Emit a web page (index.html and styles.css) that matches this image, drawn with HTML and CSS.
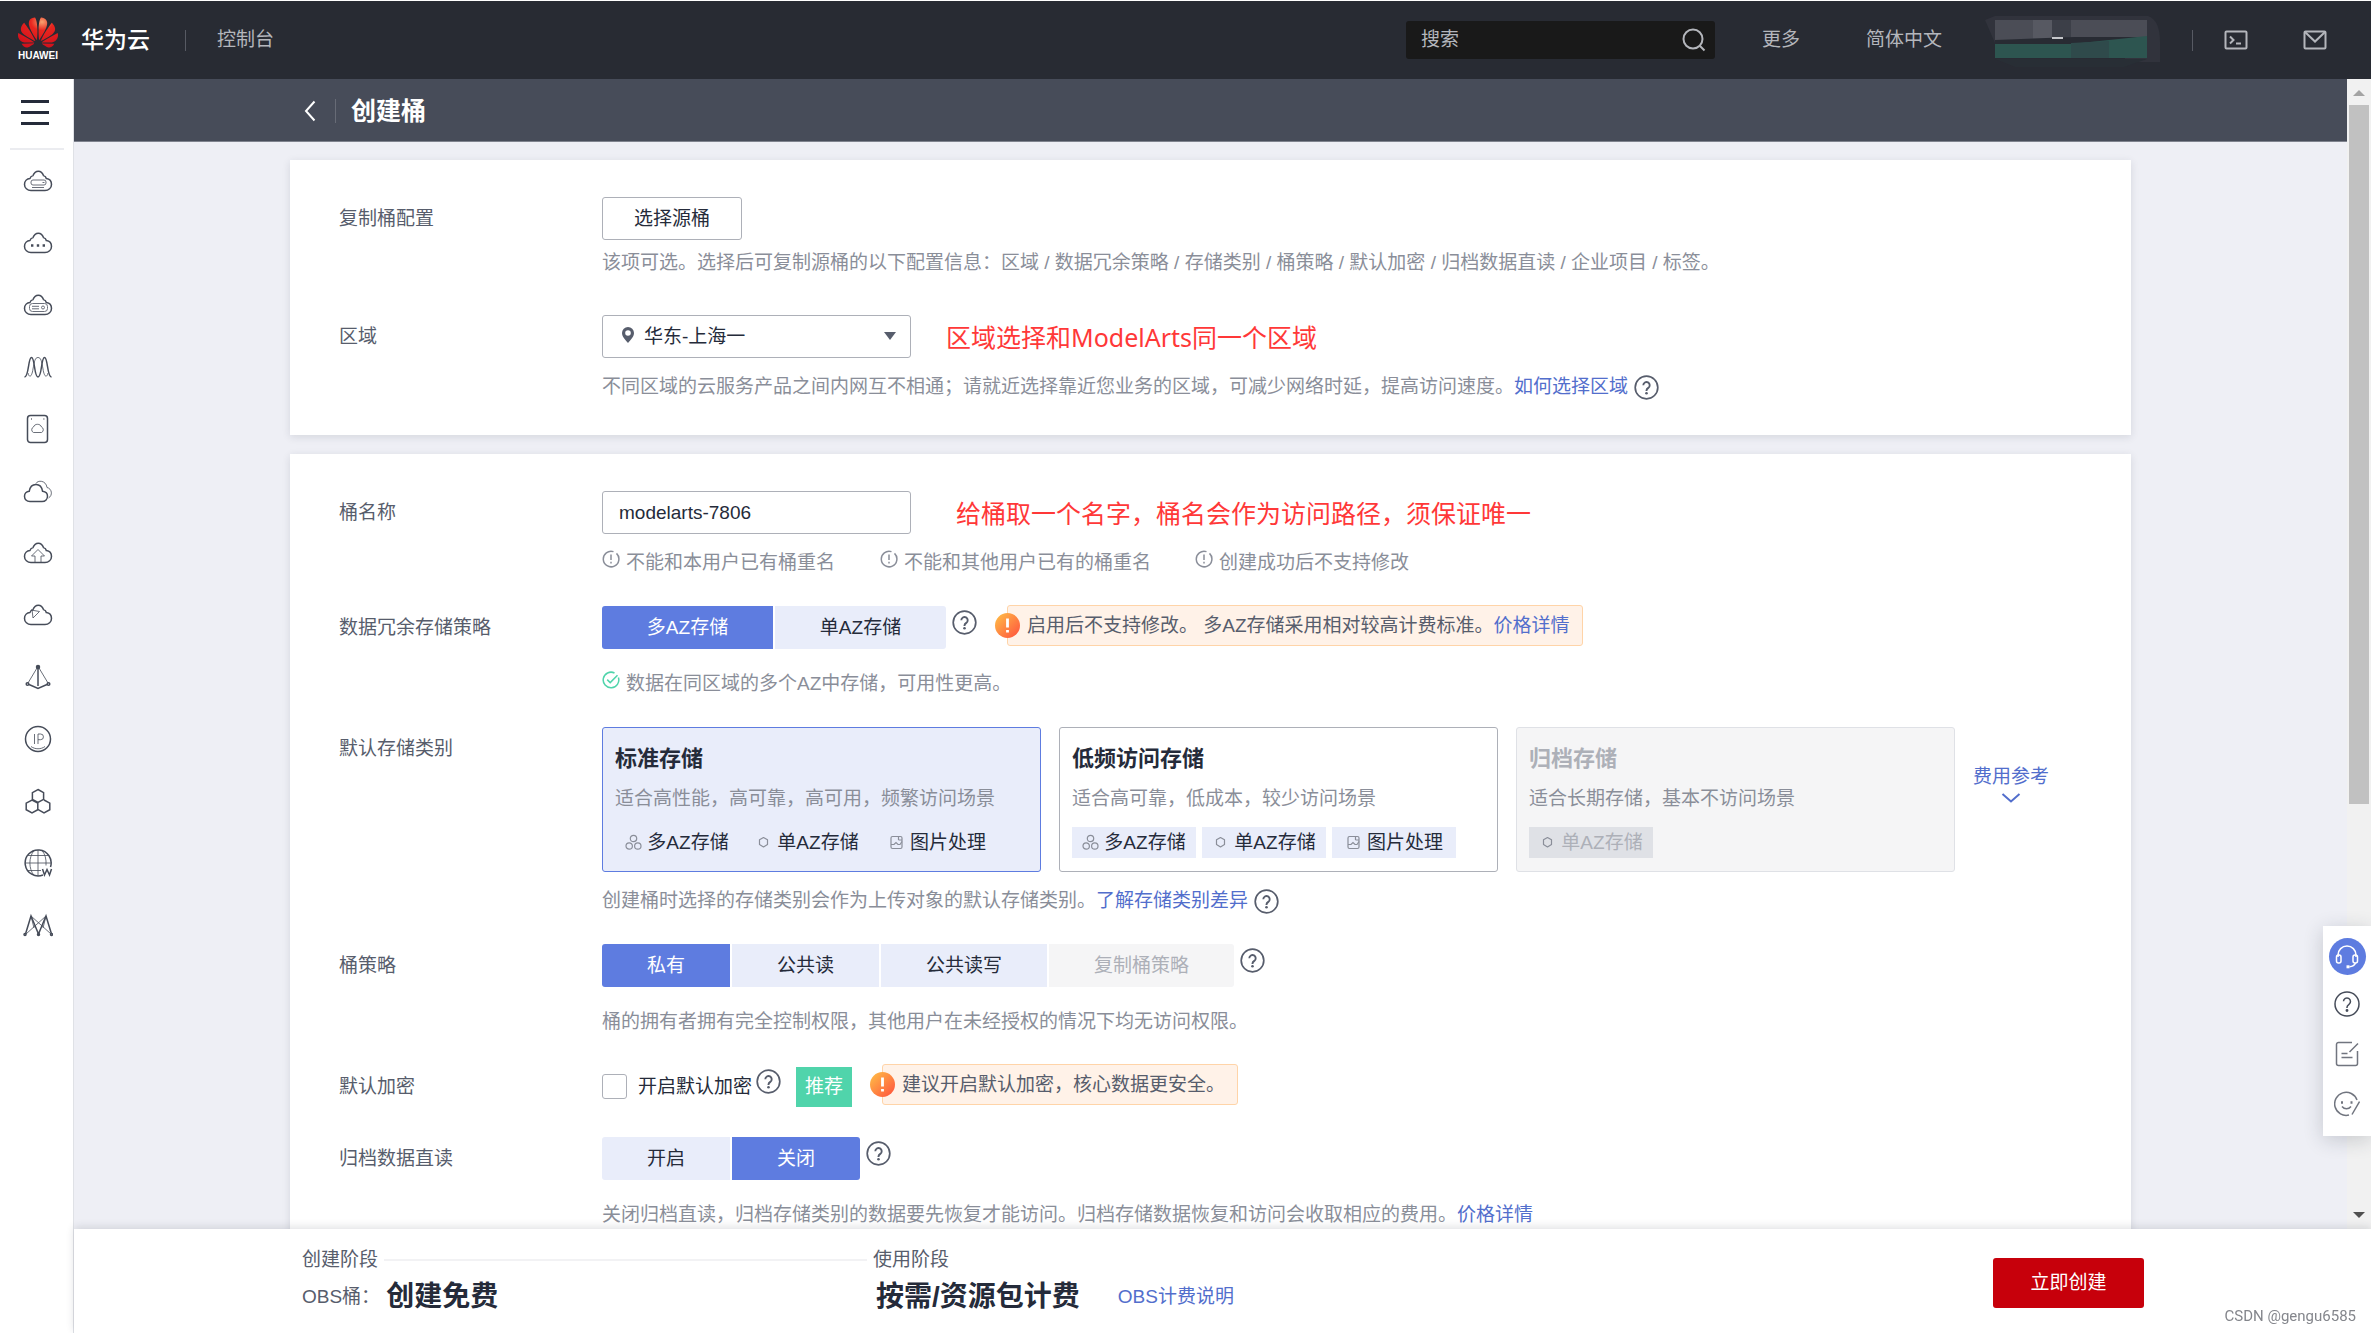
FILE: index.html
```html
<!DOCTYPE html>
<html lang="zh-CN">
<head>
<meta charset="utf-8">
<meta name="viewport" content="width=device-width, initial-scale=1">
<title>创建桶 - 华为云</title>
<link rel="stylesheet" href="styles.css">
</head>
<body>
<svg class="sprite" aria-hidden="true">
  <symbol id="cloud" viewBox="0 0 30 24"><path d="M8 21.5C4.4 21.5 1.5 19 1.5 15.4 1.5 12 4 9.6 7 9.4 7.5 7.6 8.6 7 10 6.6 11 4 12.8 2.2 15.3 2.2S19.600 4 20.500 6.600C22 7 23 7.800 23.300 9.500 26.200 9.900 28.500 12.200 28.500 15.400 28.500 19 25.600 21.500 22 21.500Z"/></symbol>
  <symbol id="help" viewBox="0 0 25 25"><circle cx="12.500" cy="12.500" r="11.300" stroke-width="1.700"/><path stroke-width="1.900" d="M9.300 10.200a3.200 3.200 0 1 1 5 2.700c-1.200.8-1.800 1.300-1.800 2.600v.4"/><circle cx="12.500" cy="18.300" r="1.300" fill="currentColor" stroke="none"/></symbol>
  <symbol id="note" viewBox="0 0 18 18"><path d="M11.500 1.600A7.800 7.800 0 1 0 14.500 3.400M9 4.500v5.500M9 11.800v1.700"/></symbol>
  <symbol id="done" viewBox="0 0 18 18"><path d="M12.500 2A7.800 7.800 0 1 0 16.400 6.500M5.200 8.600l3 3 7.300-7.300"/></symbol>
  <symbol id="warn" viewBox="0 0 25 25"><defs><linearGradient id="warn-fill" x1="0" y1="0" x2="1" y2="1"><stop offset="0" stop-color="#ffc247"/><stop offset="1" stop-color="#ff4f3d"/></linearGradient></defs><circle cx="12.500" cy="12.500" r="12.500" fill="url(#warn-fill)" stroke="none"/><path d="M12.500 5.500v9M12.500 17v2.500" stroke="#fff" stroke-width="2.800"/></symbol>
  <symbol id="multi" viewBox="0 0 17 17"><circle cx="8.500" cy="4.500" r="3.200"/><circle cx="4.200" cy="12" r="3.200"/><circle cx="12.800" cy="12" r="3.200"/></symbol>
  <symbol id="single" viewBox="0 0 17 17"><path d="M8.500 3.500l4 2.300v4.800l-4 2.300-4-2.300V5.800z" stroke-linejoin="round"/></symbol>
  <symbol id="image" viewBox="0 0 17 17"><rect x="3" y="2.500" width="11" height="12" rx="1.500"/><path d="M3 10.500h3l2-2 2 2h2l2-3M10.500 3v3M10.500 6h3.500"/></symbol>
</svg>

<header class="topbar">
  <a class="brand" href="#">
    <span class="brand-mark">
      <svg class="brand-flower" viewBox="0 2.900 24 18.200" aria-hidden="true"><defs><radialGradient id="petal" cx=".6" cy=".15" r=".8"><stop offset="0" stop-color="#f7a36f"/><stop offset=".35" stop-color="#e8261f"/><stop offset="1" stop-color="#d3121c"/></radialGradient></defs><path fill="url(#petal)" d="M3.670 6.140S1.820 7.910 1.720 9.780v.35c.08 1.510 1.220 2.400 1.220 2.400 1.830 1.790 6.260 4.040 7.300 4.550 0 0 .06.03.1-.01l.02-.04v-.04C7.520 10.800 3.670 6.140 3.670 6.140zM9.650 18.600c-.02-.08-.1-.08-.1-.08l-7.380.26c.8 1.430 2.150 2.530 3.560 2.200.96-.25 3.160-1.780 3.880-2.300.06-.05.04-.09.04-.09zm.08-.78C6.490 15.630.21 12.280.21 12.280c-.15.46-.2.9-.21 1.300v.07c0 1.070.4 1.820.4 1.820.8 1.690 2.340 2.200 2.340 2.200.7.3 1.400.31 1.400.31.12.02 4.400 0 5.540 0 .05 0 .08-.05.08-.05v-.06c0-.03-.03-.05-.03-.05zM9.060 3.190a3.420 3.420 0 00-2.570 3.150v.41c.03.6.16 1.050.16 1.050.66 2.900 3.860 7.650 4.550 8.650.05.05.1.03.1.03a.1.1 0 00.06-.1c1.060-10.600-1.110-13.420-1.110-13.420-.32.02-1.190.23-1.190.23zm8.299 2.270s-.49-1.800-2.440-2.280c0 0-.57-.14-1.170-.22 0 0-2.180 2.810-1.120 13.430.01.07.06.08.06.08.07.03.1-.03.1-.03.72-1.030 3.900-5.760 4.550-8.640 0 0 .36-1.400.02-2.340zm-2.920 13.070s-.07 0-.09.05c0 0-.01.07.03.1.7.51 2.850 2 3.880 2.300 0 0 .16.05.43.06h.14c.69-.02 1.900-.37 3-2.260l-7.400-.25zm7.830-8.410c.14-2.060-1.940-3.970-1.940-3.980 0 0-3.850 4.660-6.670 10.800 0 0-.03.08.02.13l.04.01h.06c1.060-.53 5.460-2.770 7.280-4.540 0 0 1.150-.93 1.210-2.420zm1.520 2.140s-6.280 3.370-9.520 5.550c0 0-.05.04-.03.11 0 0 .03.06.07.06 1.160 0 5.560 0 5.670-.02 0 0 .57-.02 1.270-.29 0 0 1.560-.5 2.370-2.270 0 0 .73-1.450.17-3.140z"/></svg>
      <span class="brand-word">HUAWEI</span>
    </span>
    <span class="brand-name">华为云</span>
  </a>
  <span class="bar-divider"></span>
  <a class="top-link console" href="#">控制台</a>
  <label class="search">
    <input type="search" placeholder="搜索" aria-label="搜索">
    <svg viewBox="0 0 24 24" aria-hidden="true"><circle cx="11" cy="11" r="9.500"/><path d="M18 18l4.500 4.500"/></svg>
  </label>
  <a class="top-link more" href="#">更多</a>
  <a class="top-link lang" href="#">简体中文</a>
  <svg class="account" viewBox="0 0 184 54" role="img" aria-label="账号">
    <path fill="#31333c" d="M0 7L10 3h145l8 0q12 4 12 26v20H140V30H10z"/>
    <path fill="#4b4d56" d="M10 7h152v18l-152 6z"/><path fill="#575962" d="M48 7h19v20H48z"/><path fill="#3c3f48" d="M67 7h19v20H67z"/>
    <path fill="#282e35" d="M10 46h152l-34 12H40z"/>
    <path fill="#282b33" d="M10 27l80-3h72v18H10z"/>
    <path fill="#2d5550" d="M10 31h76l76-8v22H10z"/><path fill="#2f4a4b" d="M86 30l38-2v17H86z"/>
    <path fill="#c5c6ca" d="M67 24h11v2H67z"/>
  </svg>
  <span class="bar-divider"></span>
  <button class="icon-btn" type="button" aria-label="命令行"><svg viewBox="0 0 24 20"><rect x="1.500" y="1.500" width="21" height="17" rx="1"/><path d="M6 6.500L9.500 10 6 13.500M12 13.500h5"/></svg></button>
  <button class="icon-btn" type="button" aria-label="消息"><svg viewBox="0 0 24 20"><rect x="1.500" y="1.500" width="21" height="17" rx="1"/><path d="M2 2l10 9.500L22 2"/></svg></button>
</header>

<div class="shell">
  <nav class="rail" aria-label="服务列表">
    <button class="menu-btn" type="button" aria-label="菜单"><span></span><span></span><span></span></button>
    <a href="#" aria-label="弹性云服务器"><svg viewBox="0 0 30 24"><use href="#cloud"/><g class="thin"><rect x="8" y="11" width="15" height="5" rx="2"/><path d="M9 18.500h12M19.500 13.500h2"/></g></svg></a>
    <a href="#" aria-label="云耀云服务器"><svg viewBox="0 0 30 24"><use href="#cloud"/><path stroke-width="2.400" d="M8 14.500h2.400M13.800 14.500h2.400M19.600 14.500H22"/></svg></a>
    <a href="#" aria-label="裸金属服务器"><svg viewBox="0 0 30 24"><use href="#cloud"/><g class="thin"><rect x="6.500" y="10.500" width="18" height="8" rx="3"/><path d="M9 13.300h7M9 15.800h7"/><circle cx="20" cy="14.500" r="1.500"/></g></svg></a>
    <a href="#" aria-label="弹性伸缩"><svg viewBox="0 0 30 24"><path d="M1.500 22C6 22 5 2.500 8.500 2.500S11 22 15 22 18 2.500 21.500 2.500 24 22 28.500 22"/><path class="thin" d="M5 18c1.500 6 4 3 5-4C11.500 6 12 2.500 15 2.500S18.500 6 20 14c1 7 3.500 10 5 4"/></svg></a>
    <a href="#" aria-label="云硬盘"><svg viewBox="0 0 30 30"><rect x="4.500" y="1.500" width="20" height="27" rx="3"/><path class="thin" d="M10.500 18.500a3 3 0 0 1 0-5.500c1-3.600 7-3.600 8 0a3 3 0 0 1 0 5.500z"/><path d="M8 5h.8M20.500 5h.8"/></svg></a>
    <a href="#" aria-label="云备份"><svg viewBox="0 0 30 24"><path d="M7 22.500C3.500 22.500 1.500 20 1.500 17.300S3.500 12.500 6.200 12.300C7 7.500 10 5.500 13 5.500s5.800 2 6.600 6.800c3 .4 4.900 2.400 4.900 5s-2 5.200-5.500 5.200z"/><path class="thin" d="M13 4.500C14.500 1 23 1 24 8.500c5 1 6 8 1.500 10.500"/></svg></a>
    <a href="#" aria-label="对象存储服务"><svg viewBox="0 0 30 24"><use href="#cloud"/><path class="thin" d="M12 21v-6H8.500L15 8.500l6.500 6.500H18v6"/></svg></a>
    <a href="#" aria-label="虚拟私有云"><svg viewBox="0 0 30 24"><use href="#cloud"/><path class="thin" d="M9 6.500l1 8.500 6.500-6.500L8 7"/></svg></a>
    <a href="#" aria-label="弹性负载均衡"><svg viewBox="0 0 30 26"><path class="thin" d="M14 4L5 19M16 4l9 15"/><path d="M15 4v18M6 20.500l9 4 9-4"/><circle cx="15" cy="3" r="1.500" fill="currentColor"/><circle cx="4.500" cy="20" r="1.300"/><circle cx="25.500" cy="20" r="1.300"/></svg></a>
    <a href="#" aria-label="弹性公网IP"><svg viewBox="0 0 30 30"><circle cx="15" cy="15" r="12.500"/><path class="thin" d="M11.500 10v10M15 20V10h2.600a2.800 2.800 0 0 1 0 5.700H15M8 22.500c4 3 10 3 14 0"/></svg></a>
    <a href="#" aria-label="区块链服务"><svg viewBox="0 0 30 28"><path d="M15 2.500l5.600 3.200v6.600L15 15.500l-5.600-3.200V5.700zM9 13l5.800 3.200v6.500L9 26l-5.800-3.300v-6.500zM21 13l5.800 3.200v6.500L21 26l-5.800-3.300"/></svg></a>
    <a href="#" aria-label="域名与网站"><svg viewBox="0 0 30 30"><path d="M20 27A13 13 0 1 1 27.500 19"/><path class="thin" d="M2 15h26M5 7.500h20M5 22.500h13M15 2v26M11 2.500c-5.500 7-5.500 18 0 25M19 2.500c3 3.500 4.500 8.500 4 15"/><path d="M19.500 21l2 6 2.500-5.500 2.500 5.500 2-6"/></svg></a>
    <a href="#" aria-label="ModelArts"><svg viewBox="0 0 30 24"><path d="M2.500 21L8 3l7.500 18L23 3l5.500 18"/><path class="thin" d="M3 21L23 3M8 3l20 18M8 3l3 12M23 3l-3 12"/><circle cx="2" cy="21.500" r="1"/><circle cx="15.500" cy="21.500" r="1"/><circle cx="28.500" cy="21.500" r="1"/></svg></a>
  </nav>

  <div class="workspace">
    <div class="viewport">
      <main class="content">
        <div class="page-head">
          <div class="wrap page-head-in">
            <a class="back" href="#" aria-label="返回"><svg viewBox="0 0 12 22"><path d="M10.500 1.500L2 11l8.500 9.500"/></svg></a>
            <h1>创建桶</h1>
          </div>
        </div>

        <form class="wrap form">
          <section class="card">
            <div class="row">
              <label class="row-label" for="source">复制桶配置</label>
              <div class="field">
                <div class="control"><button class="plain-btn" id="source" type="button">选择源桶</button></div>
                <p class="hint near">该项可选。选择后可复制源桶的以下配置信息：区域 / 数据冗余策略 / 存储类别 / 桶策略 / 默认加密 / 归档数据直读 / 企业项目 / 标签。</p>
              </div>
            </div>
            <div class="row">
              <label class="row-label" for="region">区域</label>
              <div class="field">
                <div class="control">
                  <span class="select-box">
                    <svg class="pin" viewBox="0 0 12 16" aria-hidden="true"><path fill-rule="evenodd" d="M6 0a6 6 0 0 1 6 6c0 4-4 7.500-6 10C4 13.500 0 10 0 6a6 6 0 0 1 6-6zm0 3.200a2.800 2.800 0 1 0 0 5.600 2.800 2.800 0 0 0 0-5.600z"/></svg>
                    <select id="region"><option>华东-上海一</option></select>
                    <svg class="caret" viewBox="0 0 12 8" aria-hidden="true"><path d="M0 0h12L6 8z"/></svg>
                  </span>
                  <span class="remark">区域选择和ModelArts同一个区域</span>
                </div>
                <p class="hint mid">不同区域的云服务产品之间内网互不相通；请就近选择靠近您业务的区域，可减少网络时延，提高访问速度。<a href="#">如何选择区域</a><svg class="help"><use href="#help"/></svg></p>
              </div>
            </div>
          </section>

          <section class="card tight">
            <div class="row">
              <label class="row-label" for="name">桶名称</label>
              <div class="field">
                <div class="control">
                  <input class="text-box" id="name" type="text" value="modelarts-7806">
                  <span class="remark far">给桶取一个名字，桶名会作为访问路径，须保证唯一</span>
                </div>
                <ul class="hint mid rules">
                  <li><svg><use href="#note"/></svg>不能和本用户已有桶重名</li>
                  <li><svg><use href="#note"/></svg>不能和其他用户已有的桶重名</li>
                  <li><svg><use href="#note"/></svg>创建成功后不支持修改</li>
                </ul>
              </div>
            </div>

            <div class="row">
              <span class="row-label" id="az-label">数据冗余存储策略</span>
              <div class="field">
                <div class="control">
                  <div class="segments" role="radiogroup" aria-labelledby="az-label">
                    <label class="seg wide"><input type="radio" name="az" checked><span>多AZ存储</span></label>
                    <label class="seg wide"><input type="radio" name="az"><span>单AZ存储</span></label>
                  </div>
                  <svg class="help raised"><use href="#help"/></svg>
                  <div class="notice"><svg><use href="#warn"/></svg><span>启用后不支持修改。 多AZ存储采用相对较高计费标准。</span><a href="#">价格详情</a></div>
                </div>
                <p class="hint loose rules good"><span><svg><use href="#done"/></svg>数据在同区域的多个AZ中存储，可用性更高。</span></p>
              </div>
            </div>

            <div class="row">
              <span class="row-label" id="class-label">默认存储类别</span>
              <div class="field">
                <div class="classes" role="radiogroup" aria-labelledby="class-label">
                  <label class="class-card">
                    <input type="radio" name="class" checked>
                    <strong>标准存储</strong>
                    <span class="class-desc">适合高性能，高可靠，高可用，频繁访问场景</span>
                    <span class="tags"><span class="tag"><svg><use href="#multi"/></svg>多AZ存储</span><span class="tag"><svg><use href="#single"/></svg>单AZ存储</span><span class="tag"><svg><use href="#image"/></svg>图片处理</span></span>
                  </label>
                  <label class="class-card">
                    <input type="radio" name="class">
                    <strong>低频访问存储</strong>
                    <span class="class-desc">适合高可靠，低成本，较少访问场景</span>
                    <span class="tags"><span class="tag"><svg><use href="#multi"/></svg>多AZ存储</span><span class="tag"><svg><use href="#single"/></svg>单AZ存储</span><span class="tag"><svg><use href="#image"/></svg>图片处理</span></span>
                  </label>
                  <label class="class-card">
                    <input type="radio" name="class" disabled>
                    <strong>归档存储</strong>
                    <span class="class-desc">适合长期存储，基本不访问场景</span>
                    <span class="tags"><span class="tag"><svg><use href="#single"/></svg>单AZ存储</span></span>
                  </label>
                  <a class="cost" href="#">费用参考<svg viewBox="0 0 20 10"><path d="M1.500 1L10 8.500 18.500 1"/></svg></a>
                </div>
                <p class="hint mid">创建桶时选择的存储类别会作为上传对象的默认存储类别。<a href="#">了解存储类别差异</a><svg class="help"><use href="#help"/></svg></p>
              </div>
            </div>

            <div class="row">
              <span class="row-label" id="policy-label">桶策略</span>
              <div class="field">
                <div class="control">
                  <div class="segments" role="radiogroup" aria-labelledby="policy-label">
                    <label class="seg"><input type="radio" name="policy" checked><span>私有</span></label>
                    <label class="seg"><input type="radio" name="policy"><span>公共读</span></label>
                    <label class="seg"><input type="radio" name="policy"><span>公共读写</span></label>
                    <label class="seg"><input type="radio" name="policy" disabled><span>复制桶策略</span></label>
                  </div>
                  <svg class="help raised"><use href="#help"/></svg>
                </div>
                <p class="hint loose">桶的拥有者拥有完全控制权限，其他用户在未经授权的情况下均无访问权限。</p>
              </div>
            </div>

            <div class="row">
              <span class="row-label">默认加密</span>
              <div class="field">
                <div class="control">
                  <input class="tick" id="encrypt" type="checkbox">
                  <label class="tick-label" for="encrypt">开启默认加密</label>
                  <svg class="help raised snug"><use href="#help"/></svg>
                  <span class="badge">推荐</span>
                  <div class="notice"><svg><use href="#warn"/></svg><span>建议开启默认加密，核心数据更安全。</span></div>
                </div>
              </div>
            </div>

            <div class="row">
              <span class="row-label" id="archive-label">归档数据直读</span>
              <div class="field">
                <div class="control">
                  <div class="segments" role="radiogroup" aria-labelledby="archive-label">
                    <label class="seg"><input type="radio" name="archive"><span>开启</span></label>
                    <label class="seg"><input type="radio" name="archive" checked><span>关闭</span></label>
                  </div>
                  <svg class="help raised"><use href="#help"/></svg>
                </div>
                <p class="hint loose">关闭归档直读，归档存储类别的数据要先恢复才能访问。归档存储数据恢复和访问会收取相应的费用。<a href="#">价格详情</a></p>
              </div>
            </div>
          </section>
        </form>
      </main>
      <div class="scrollbar" aria-hidden="true"><i class="up"></i><i class="thumb"></i><i class="down"></i></div>
    </div>

    <footer class="summary">
      <div class="stage first">
        <div class="stage-name">创建阶段<span class="rule"></span></div>
        <div class="stage-line"><span>OBS桶：</span><strong>创建免费</strong></div>
      </div>
      <div class="stage">
        <div class="stage-name">使用阶段</div>
        <div class="stage-line"><strong>按需/资源包计费</strong><a href="#">OBS计费说明</a></div>
      </div>
      <button class="primary" type="button">立即创建</button>
    </footer>
  </div>
</div>

<aside class="dock">
  <button class="call" type="button" aria-label="客服"><svg viewBox="0 0 24 24"><path d="M3 12V10a9 9 0 0 1 18 0v2"/><rect x="1.500" y="10" width="4.500" height="8" rx="2"/><rect x="18" y="10" width="4.500" height="8" rx="2"/><path d="M20.500 18c-1 2.500-3 3.500-6 3.800"/><path stroke-width="3" d="M11.500 21.800h3"/></svg></button>
  <button type="button" aria-label="帮助"><svg viewBox="0 0 26 26"><circle cx="13" cy="13" r="12"/><path d="M9.500 10.300a3.500 3.500 0 1 1 5.500 3c-1.300.9-2 1.600-2 3v.7"/><circle cx="13" cy="19.500" r=".7"/></svg></button>
  <button type="button" aria-label="备忘"><svg class="soft" viewBox="0 0 26 26"><path d="M18 1.500H4.500a2 2 0 0 0-2 2v19a2 2 0 0 0 2 2h17a2 2 0 0 0 2-2V10M24 2.500l-8.500 8.500M7.500 12.500h6M7.500 16.500h11"/></svg></button>
  <button type="button" aria-label="反馈"><svg class="soft" viewBox="0 0 26 26"><path d="M15 24A11.500 11.500 0 1 1 23 9M25.500 10.500L18 23.500M8 15.500c2.500 3 6.500 3 9 0"/><path stroke-width="2.500" d="M7 11.500h2M16.500 11.500h2"/></svg></button>
</aside>
<div class="watermark">CSDN @gengu6585</div>
</body>
</html>
```
FILE: styles.css
```css
* { box-sizing: border-box; }

:root {
  --text: #252b3a;
  --muted: #8a8e99;
  --label: #575d6c;
  --link: #526ecc;
  --blue: #5e7ce0;
  --pale: #e9edfa;
  --grey: #f5f5f6;
  --line: #adb0b8;
}

body {
  margin: 0;
  height: 100vh;
  display: flex;
  flex-direction: column;
  overflow: hidden;
  background: #eeeff5;
  color: var(--text);
  font: 19px/28px "Liberation Sans", "Noto Sans CJK SC", sans-serif;
}

h1, p, ul { margin: 0; padding: 0; }
ul { list-style: none; }
a { color: var(--link); text-decoration: none; }
button, input, select { font: inherit; color: inherit; margin: 0; }
button { cursor: pointer; }
svg { fill: none; stroke: currentColor; flex: none; }
.sprite { position: absolute; width: 0; height: 0; }

/* top bar */
.topbar {
  flex: none;
  height: 79px;
  display: flex;
  align-items: center;
  padding: 0 44px 0 18px;
  border-top: 1px solid #fff;
  background: #282b33;
  color: #b4b6bc;
}
.brand { display: flex; align-items: center; gap: 23px; color: #fff; }
.brand-mark { display: flex; flex-direction: column; align-items: center; width: 40px; }
.brand-flower { width: 40px; height: 31px; stroke: none; }
.brand-word { font-size: 10px; line-height: 16px; font-weight: bold; }
.brand-name { font-size: 23px; font-weight: 500; }
.bar-divider { width: 1px; height: 21px; background: #575a63; margin: 0 31px 0 35px; }
.top-link { color: inherit; white-space: nowrap; }
.search {
  display: flex;
  align-items: center;
  width: 309px;
  height: 38px;
  margin-left: auto;
  padding: 0 9px 0 15px;
  border-radius: 3px;
  background: #191919;
}
.search input { flex: 1; min-width: 0; border: 0; padding: 0; background: none; outline: 0; color: #b4b6bc; }
.search input::placeholder { color: #b4b6bc; opacity: 1; }
.search svg { width: 24px; height: 24px; stroke-width: 2; }
.more { margin-left: 47px; }
.lang { margin-left: 66px; }
.account { width: 184px; height: 54px; margin-left: 43px; margin-right: -12px; stroke: none; }
.icon-btn { display: flex; border: 0; padding: 0; background: none; }
.icon-btn svg { width: 24px; height: 20px; stroke-width: 2; }
.icon-btn + .icon-btn { margin-left: 55px; }

/* left rail */
.shell { flex: 1; min-height: 0; display: flex; }
.rail {
  flex: none;
  width: 74px;
  display: flex;
  flex-direction: column;
  align-items: center;
  border-right: 1px solid #dfe1e6;
  background: #fff;
}
.menu-btn {
  width: 54px;
  height: 71px;
  display: flex;
  flex-direction: column;
  align-items: center;
  justify-content: center;
  gap: 8px;
  padding: 0 3px 3px 0;
  border: 0;
  border-bottom: 2px solid #ebecf0;
  background: none;
}
.menu-btn span { width: 28px; height: 3px; background: var(--text); }
.rail a { width: 54px; height: 62px; padding-left: 3px; display: flex; align-items: center; justify-content: center; color: #464c59; }
.rail svg { width: 30px; height: 30px; stroke-width: 1.5; }
.rail .thin { stroke-width: 1; opacity: .8; }

/* page area */
.workspace { flex: 1; min-width: 0; display: flex; flex-direction: column; }
.viewport { flex: 1; min-height: 0; display: flex; }
.content { flex: 1; min-width: 0; overflow: hidden; }
.wrap { max-width: 1841px; margin: 0 auto; }
.page-head { background: #474c59; border-bottom: 1px solid #7f838e; color: #fff; }
.page-head-in { height: 62px; display: flex; align-items: center; padding: 2px 0 0 14px; }
.back { color: #fff; display: flex; padding-right: 19px; border-right: 1px solid #676b76; }
.back svg { width: 12px; height: 24px; stroke-width: 2; }
h1 { margin-left: 15px; font-size: 25px; line-height: 32px; font-weight: bold; }

.scrollbar { flex: none; width: 24px; display: flex; flex-direction: column; align-items: center; padding: 11px 0; background: #f1f1f1; }
.scrollbar i { border: 6px solid transparent; }
.scrollbar .up { border-top: 0; border-bottom-color: #a3a3a3; }
.scrollbar .thumb { border: 0; width: 20px; height: 62%; margin: 9px 0 auto; background: #c1c1c1; }
.scrollbar .down { border-bottom: 0; border-top-color: #505050; }

/* form */
.card { margin-top: 18px; padding: 37px 48px 34px 49px; display: flex; flex-direction: column; gap: 38px; background: #fff; box-shadow: 0 2px 8px rgba(37, 43, 58, .12); }
.card + .card { margin-top: 19px; }
.card.tight { gap: 29px; }
.row { display: flex; }
.row-label { flex: none; width: 263px; line-height: 43px; color: var(--label); }
.field { flex: 1; min-width: 0; }
.control { display: flex; align-items: center; height: 43px; }
.hint { color: var(--muted); white-space: nowrap; display: flex; align-items: center; height: 28px; }
.hint.near { margin-top: 9px; }
.hint.mid { margin-top: 15px; }
.hint.loose { margin-top: 21px; }

.plain-btn { height: 43px; padding: 0 31px; border: 1px solid var(--line); border-radius: 3px; background: #fff; }
.select-box { position: relative; width: 309px; }
.select-box select, .text-box { width: 309px; height: 43px; border: 1px solid var(--line); border-radius: 3px; background: #fff; outline: 0; }
.select-box select { display: block; appearance: none; padding: 0 36px 0 41px; }
.text-box { padding: 0 16px; }
.pin, .caret { position: absolute; fill: #575d6c; stroke: none; pointer-events: none; }
.pin { left: 20px; top: 12px; width: 12px; height: 16px; }
.caret { right: 15px; top: 17px; width: 12px; height: 8px; }
.remark { margin-left: 35px; color: #ff3838; font: 25px/32px "Noto Sans", "Noto Sans CJK SC", sans-serif; white-space: nowrap; }
.remark.far { margin-left: 45px; }

.help { width: 25px; height: 25px; margin-left: 6px; color: #575d6c; }
.raised { margin-bottom: 10px; }
.snug { margin-left: 4px; }
.rules li, .rules span { display: flex; }
.rules li { min-width: 278px; }
.rules li + li { min-width: 315px; }
.rules svg { width: 18px; height: 18px; margin: 1px 6px 0 0; stroke-width: 1.5; }
.good svg { color: #50d4ab; }

.segments { display: flex; gap: 2px; }
.seg { position: relative; display: flex; height: 43px; padding: 0 45px; align-items: center; justify-content: center; }
.seg.wide { width: 171px; }
.seg input { position: absolute; inset: 0; appearance: none; background: var(--pale); }
.seg span { position: relative; white-space: nowrap; }
.seg:first-child input { border-radius: 3px 0 0 3px; }
.seg:last-child input { border-radius: 0 3px 3px 0; }
.seg input:checked { background: var(--blue); }
.seg input:checked + span { color: #fff; }
.seg input:disabled { background: var(--grey); }
.seg input:disabled + span { color: #adb0b8; }

.notice { display: flex; align-items: center; height: 41px; margin: 0 0 4px 30px; padding-right: 12px; border: 1px solid #ffd4a8; border-radius: 3px; background: #fff2e8; color: var(--label); white-space: nowrap; }
.notice svg { width: 25px; height: 25px; margin: 0 7px 0 -13px; }

.classes { display: flex; gap: 18px; }
.class-card { position: relative; flex: 0 1 439px; height: 145px; display: flex; flex-direction: column; padding: 16px 13px 0; white-space: nowrap; }
.class-card input { position: absolute; inset: 0; appearance: none; border: 1px solid var(--line); border-radius: 3px; }
.class-card input:checked { background: var(--pale); border-color: var(--blue); }
.class-card input:disabled { background: var(--grey); border-color: #dfe1e6; }
.class-card strong, .class-card span { position: relative; }
.class-card strong { font-size: 22px; line-height: 32px; }
.class-desc { margin-top: 10px; color: var(--muted); }
.tags { display: flex; gap: 6px; margin-top: 14px; }
.tag { display: flex; align-items: center; justify-content: center; width: 124px; height: 31px; background: var(--pale); }
.tag svg { width: 17px; height: 17px; margin-right: 5px; color: #8a8e99; stroke-width: 1.2; }
.class-card input:disabled ~ strong, .class-card input:disabled ~ .tags { color: #adb0b8; }
.class-card input:disabled ~ .tags .tag { background: #dfe1e6; }
.cost { display: flex; flex-direction: column; align-items: center; margin-top: 36px; }
.cost svg { width: 20px; height: 10px; stroke-width: 2; margin-top: 2px; }

.tick { appearance: none; width: 25px; height: 25px; border: 1px solid var(--line); border-radius: 3px; background: #fff; }
.tick-label { margin-left: 11px; }
.badge { height: 40px; margin-left: 15px; padding: 0 9px; line-height: 40px; background: #50d4ab; color: #fff; }

/* bottom summary */
.summary {
  position: relative;
  flex: none;
  height: 104px;
  display: flex;
  align-items: center;
  padding: 4px 227px 0 228px;
  background: #fff;
  box-shadow: 0 -2px 8px rgba(37, 43, 58, .14);
  color: var(--label);
}
.stage.first { width: 571px; }
.stage-name { display: flex; align-items: center; }
.rule { flex: 1; height: 2px; margin: 0 6px; background: #f2f2f4; }
.stage-line { display: flex; align-items: center; height: 46px; }
.stage-line span { margin-right: 3px; }
.stage strong { margin-left: 3px; font-size: 28px; line-height: 40px; color: var(--text); }
.stage a { margin-left: 38px; }
.primary { width: 151px; height: 50px; margin-left: auto; border: 0; border-radius: 3px; background: #c7000b; color: #fff; }

/* floating tools */
.dock {
  position: fixed;
  right: 0;
  bottom: 197px;
  width: 48px;
  height: 210px;
  display: flex;
  flex-direction: column;
  align-items: center;
  gap: 24px;
  padding-top: 12px;
  background: #fff;
  box-shadow: 0 4px 20px rgba(37, 43, 58, .2);
}
.dock button { display: flex; padding: 0; border: 0; background: none; color: #464c59; }
.dock svg { width: 26px; height: 26px; stroke-width: 1.5; }
.dock .soft { color: #71757f; }
.dock .call { width: 37px; height: 37px; margin-bottom: -8px; align-items: center; justify-content: center; border-radius: 50%; background: var(--blue); color: #fff; }
.dock .call svg { width: 24px; height: 24px; }
.watermark { position: fixed; right: 15px; bottom: 6px; font: 15px/22px Roboto, "Liberation Sans", sans-serif; color: #84868c; }
```
